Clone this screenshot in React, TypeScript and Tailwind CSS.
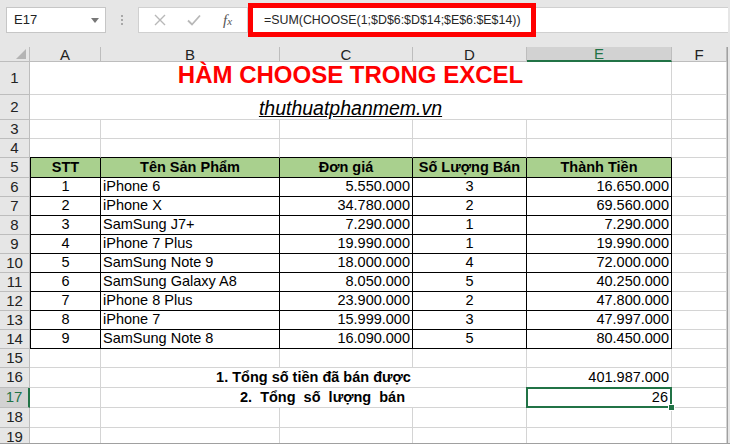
import React from "react";

const FONT = "font-['Liberation_Sans',Arial,sans-serif]";
const W = ["w-[71px]", "w-[179px]", "w-[133px]", "w-[114px]", "w-[145px]", "w-[55px]"];
const GRID = "border-r border-b border-[#d4d4d4]";
const TBL = "border-r border-b border-black";

const data: [number, string, string, number, string][] = [
  [1, "iPhone 6", "5.550.000", 3, "16.650.000"],
  [2, "iPhone X", "34.780.000", 2, "69.560.000"],
  [3, "SamSung J7+", "7.290.000", 1, "7.290.000"],
  [4, "iPhone 7 Plus", "19.990.000", 1, "19.990.000"],
  [5, "SamSung Note 9", "18.000.000", 4, "72.000.000"],
  [6, "SamSung Galaxy A8", "8.050.000", 5, "40.250.000"],
  [7, "iPhone 8 Plus", "23.900.000", 2, "47.800.000"],
  [8, "iPhone 7", "15.999.000", 3, "47.997.000"],
  [9, "SamSung Note 8", "16.090.000", 5, "80.450.000"],
];

function Row({ n, h, sel, children }: { n: number; h: string; sel?: boolean; children: React.ReactNode }) {
  return (
    <div className={`flex ${h}`}>
      <div
        className={
          sel
            ? "w-[30px] shrink-0 bg-[#d2d2d2] border-b border-[#bdbdbd] border-r-2 border-r-[#217346] flex items-center justify-center text-[15px] text-[#217346]"
            : "w-[30px] shrink-0 bg-[#e6e6e6] border-b border-r border-[#bdbdbd] flex items-center justify-center text-[15px] text-[#222]"
        }
      >
        {n}
      </div>
      {children}
      <div className="flex-1 border-b border-[#d4d4d4]" />
    </div>
  );
}

function Empty({ top }: { top?: boolean }) {
  return (
    <>
      {W.map((w, i) => (
        <div
          key={i}
          className={`${w} shrink-0 ${
            top && i < 5 ? "border-r border-b border-r-[#d4d4d4] border-b-black" : GRID
          }`}
        />
      ))}
    </>
  );
}

export default function App() {
  return (
    <div className={`${FONT} w-[730px] h-[444px] overflow-hidden bg-white text-black relative`}>
      {/* Formula bar */}
      <div className="h-[47px] bg-[#e6e6e6] flex items-start pt-[7px] pl-[6px] relative">
        <div className="w-[100px] h-[26px] bg-white border border-[#c6c6c6] flex items-center pl-[7px] pr-[6px] text-[13px] text-[#222]">
          <span className="flex-1">E17</span>
          <span className="w-0 h-0 border-l-[4px] border-r-[4px] border-t-[5px] border-l-transparent border-r-transparent border-t-[#777]" />
        </div>
        <div className="w-[32px] h-[26px] flex flex-col items-center justify-center gap-[2px]">
          <span className="w-[2px] h-[2px] bg-[#a8a8a8]" />
          <span className="w-[2px] h-[2px] bg-[#a8a8a8]" />
          <span className="w-[2px] h-[2px] bg-[#a8a8a8]" />
        </div>
        <div className="w-[110px] h-[26px] bg-white border border-[#d0d0d0] flex items-center justify-around pl-[4px] pr-[4px]">
          <svg width="12" height="12" viewBox="0 0 12 12">
            <path d="M1 1 L11 11 M11 1 L1 11" stroke="#b8b8b8" strokeWidth="1.4" fill="none" />
          </svg>
          <svg width="14" height="12" viewBox="0 0 14 12">
            <path d="M1 6.5 L5 10.5 L13 1.5" stroke="#b8b8b8" strokeWidth="1.8" fill="none" />
          </svg>
          <span className="font-['Liberation_Serif',serif] italic text-[15px] text-[#555] leading-none">
            f<span className="text-[11px]">x</span>
          </span>
        </div>
        <div className="w-[480px] h-[26px] bg-white border-y border-[#d0d0d0] flex items-center pl-[16px] text-[12.4px] text-[#262626]">
          =SUM(CHOOSE(1;$D$6:$D$14;$E$6:$E$14))
        </div>
        <div className="absolute left-[248px] top-[3px] w-[288px] h-[34px] border-[5px] border-[#ff0000]" />
      </div>

      {/* Column headers */}
      <div className="flex h-[15px]">
        <div className="w-[30px] shrink-0 bg-[#e6e6e6] border-r border-b border-[#bdbdbd] relative">
          <svg className="absolute right-[3px] bottom-[2px]" width="10" height="10" viewBox="0 0 10 10">
            <path d="M10 0 L10 10 L0 10 Z" fill="#b4b4b4" />
          </svg>
        </div>
        {["A", "B", "C", "D", "E", "F"].map((c, i) =>
          c === "E" ? (
            <div
              key={c}
              className={`${W[i]} shrink-0 bg-[#d2d2d2] border-r border-[#bdbdbd] border-b-2 border-b-[#217346] flex items-center justify-center text-[15px] text-[#217346] leading-none`}
            >
              {c}
            </div>
          ) : (
            <div
              key={c}
              className={`${W[i]} shrink-0 bg-[#e6e6e6] border-r border-b border-[#bdbdbd] flex items-center justify-center text-[15px] text-[#222] leading-none`}
            >
              {c}
            </div>
          )
        )}
        <div className="flex-1 bg-[#e6e6e6] border-b border-[#bdbdbd]" />
      </div>

      {/* Row 1 */}
      <Row n={1} h="h-[33px]">
        <div className={`w-[642px] shrink-0 ${GRID} flex items-end justify-center pb-[1px] text-[24px] font-bold text-[#ff0000]`}>
          HÀM CHOOSE TRONG EXCEL
        </div>
        <div className={`${W[5]} shrink-0 ${GRID}`} />
      </Row>
      {/* Row 2 */}
      <Row n={2} h="h-[25px]">
        <div className={`w-[642px] shrink-0 ${GRID} flex items-end justify-center text-[19.5px] italic underline leading-[22px]`}>
          thuthuatphanmem.vn
        </div>
        <div className={`${W[5]} shrink-0 ${GRID}`} />
      </Row>
      <Row n={3} h="h-[19px]">
        <Empty />
      </Row>
      <Row n={4} h="h-[19px]">
        <Empty top />
      </Row>
      {/* Row 5 header */}
      <Row n={5} h="h-[20px]">
        {["STT", "Tên Sản Phẩm", "Đơn giá", "Số Lượng Bán", "Thành Tiền"].map((t, i) => (
          <div
            key={t}
            className={`${W[i]} shrink-0 ${TBL} ${i === 0 ? "border-l" : ""} bg-[#a9d08e] flex items-center justify-center text-[14.5px] font-bold whitespace-nowrap`}
          >
            {t}
          </div>
        ))}
        <div className={`${W[5]} shrink-0 ${GRID}`} />
      </Row>
      {data.map((r, k) => (
        <Row key={k} n={6 + k} h="h-[19px]">
          <div className={`${W[0]} shrink-0 ${TBL} border-l flex items-center justify-center text-[14.5px]`}>{r[0]}</div>
          <div className={`${W[1]} shrink-0 ${TBL} flex items-center pl-[2px] text-[14.5px] whitespace-nowrap`}>{r[1]}</div>
          <div className={`${W[2]} shrink-0 ${TBL} flex items-center justify-end pr-[2px] text-[14.5px]`}>{r[2]}</div>
          <div className={`${W[3]} shrink-0 ${TBL} flex items-center justify-center text-[14.5px]`}>{r[3]}</div>
          <div className={`${W[4]} shrink-0 ${TBL} flex items-center justify-end pr-[2px] text-[14.5px]`}>{r[4]}</div>
          <div className={`${W[5]} shrink-0 ${GRID}`} />
        </Row>
      ))}
      <Row n={15} h="h-[19px]">
        <Empty />
      </Row>
      <Row n={16} h="h-[20px]">
        <div className={`${W[0]} shrink-0 ${GRID}`} />
        <div className={`w-[426px] shrink-0 ${GRID} flex items-center justify-center text-[14.5px] font-bold whitespace-nowrap`}>
          1. Tổng số tiền đã bán được
        </div>
        <div className={`${W[4]} shrink-0 ${GRID} flex items-center justify-end pr-[2px] text-[14.5px]`}>401.987.000</div>
        <div className={`${W[5]} shrink-0 ${GRID}`} />
      </Row>
      <Row n={17} h="h-[20px]" sel>
        <div className={`${W[0]} shrink-0 ${GRID}`} />
        <div className={`w-[426px] shrink-0 ${GRID} flex items-center justify-center pl-[18px] text-[14.5px] font-bold whitespace-pre`}>
          {"2.  Tổng  số  lượng  bán"}
        </div>
        <div className={`${W[4]} shrink-0 ${GRID} relative flex items-center justify-end pr-[3px] text-[14.5px]`}>
          26
          <div className="absolute -left-[1px] -top-[1px] -right-[1px] -bottom-[1px] border-2 border-[#217346]" />
          <div className="absolute -right-[4px] -bottom-[4px] w-[7px] h-[7px] bg-[#217346] border border-white" />
        </div>
        <div className={`${W[5]} shrink-0 ${GRID}`} />
      </Row>
      <Row n={18} h="h-[20px]">
        <Empty />
      </Row>
      <Row n={19} h="h-[20px]">
        <Empty />
      </Row>

      {/* window edges */}
      <div className="absolute left-[727px] top-[47px] bottom-0 w-[3px] bg-[#e6e6e6] border-l border-[#a0a0a0]" />
      <div className="absolute left-0 right-0 top-[443px] h-[1px] bg-[#a0a0a0]" />
    </div>
  );
}
